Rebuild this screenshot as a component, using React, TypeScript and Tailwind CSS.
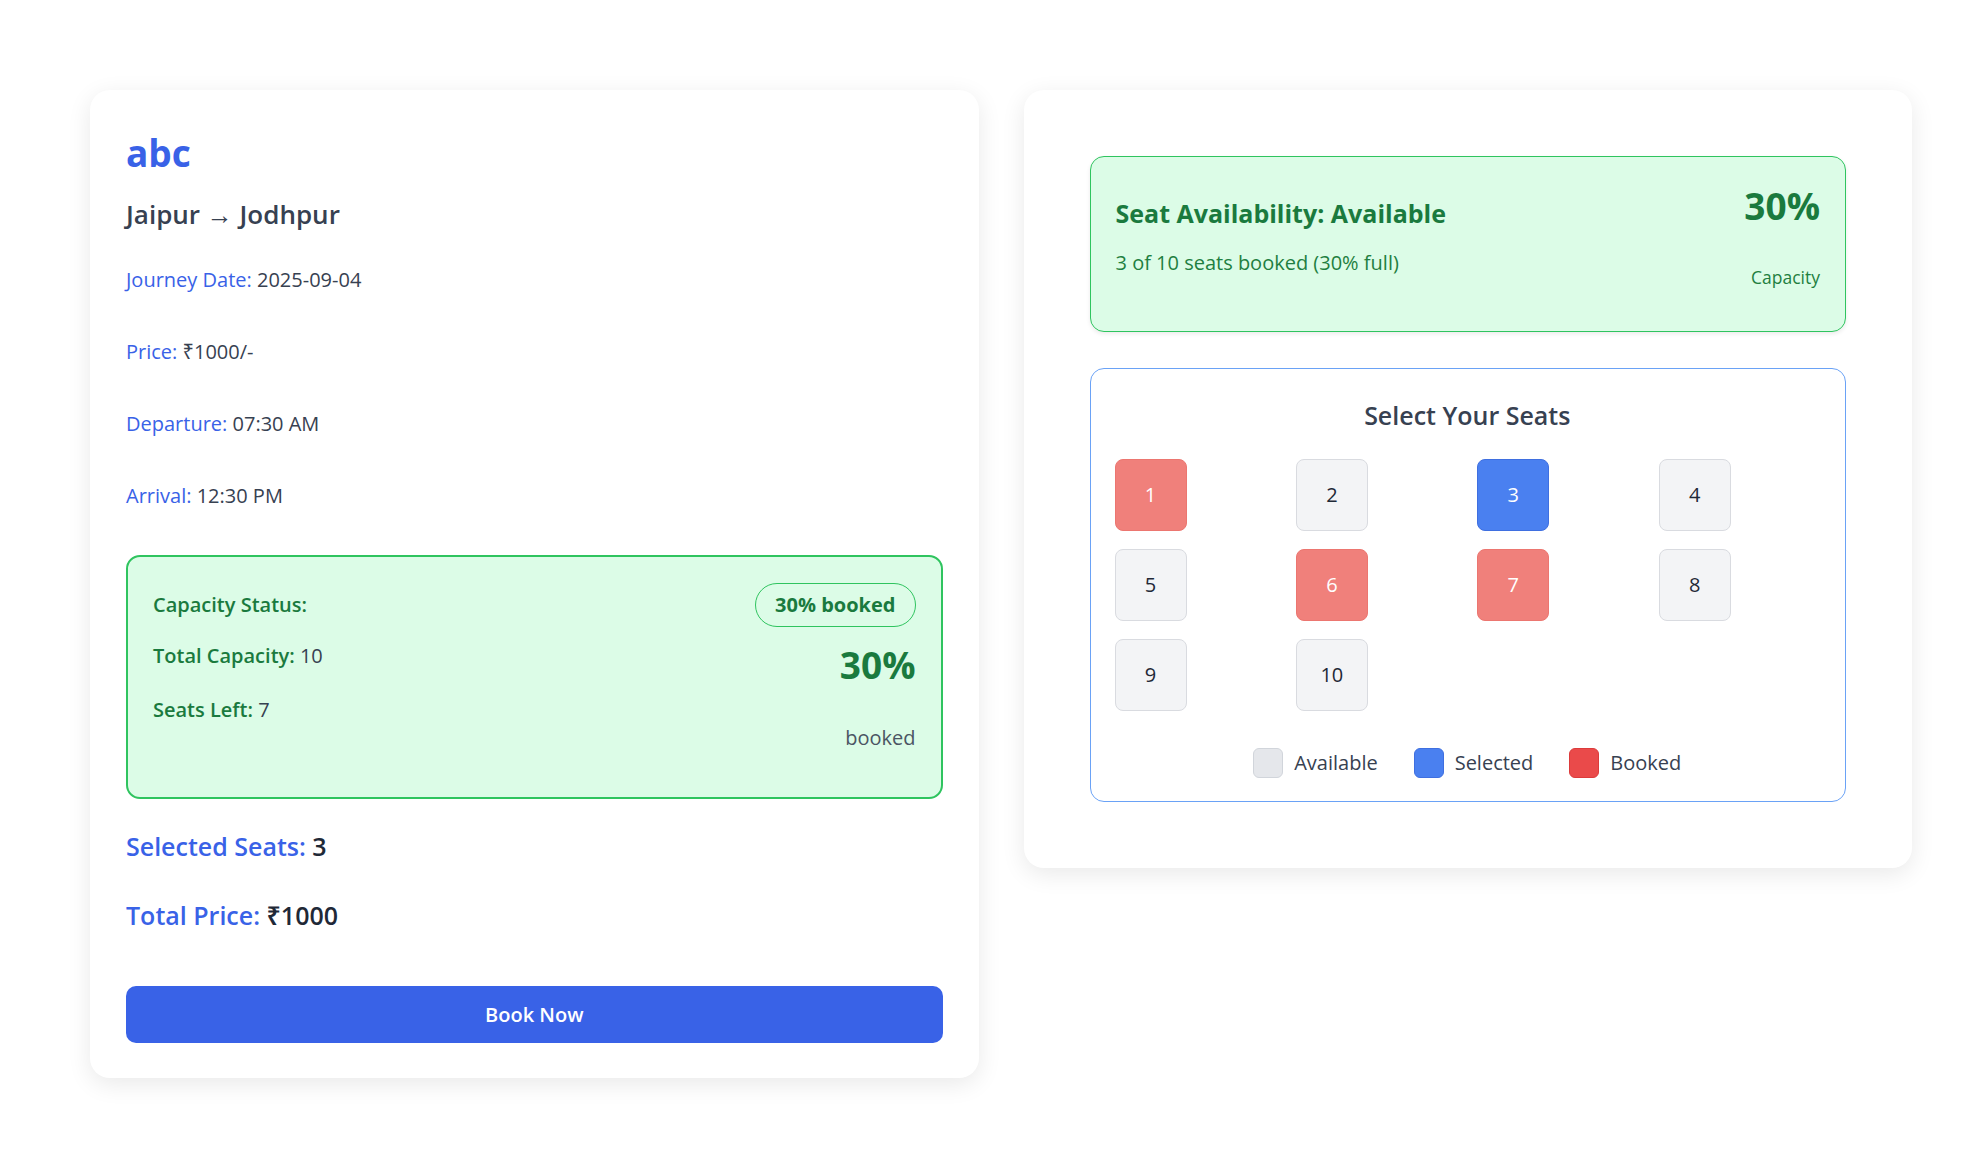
import React from "react";

type SeatState = "available" | "selected" | "booked";

const seats: { n: number; s: SeatState }[] = [
  { n: 1, s: "booked" },
  { n: 2, s: "available" },
  { n: 3, s: "selected" },
  { n: 4, s: "available" },
  { n: 5, s: "available" },
  { n: 6, s: "booked" },
  { n: 7, s: "booked" },
  { n: 8, s: "available" },
  { n: 9, s: "available" },
  { n: 10, s: "available" },
];

function Seat({ n, s }: { n: number; s: SeatState }) {
  const cls =
    s === "booked"
      ? "bg-[#f0807b] border-[#ec7670] text-white"
      : s === "selected"
      ? "bg-[#4a80f0] border-[#3f6fe0] text-white"
      : "bg-[#f3f4f6] border-[#d9dbe0] text-[#1f2937]";
  return (
    <div
      className={`w-[72px] h-[72px] rounded-[8px] border flex items-center justify-center text-[20px] font-medium ${cls}`}
    >
      {n}
    </div>
  );
}

function InfoRow({ label, value, className }: { label: string; value: string; className: string }) {
  return (
    <p className={`text-[20px] leading-[30px] ${className}`}>
      <span className="text-[#3962e7] font-medium">{label}</span>{" "}
      <span className="text-[#374151]">{value}</span>
    </p>
  );
}

export default function App() {
  return (
    <div
      className="min-h-screen bg-white"
      style={{ fontFamily: '"Open Sans", "Noto Sans", "Liberation Sans", sans-serif' }}
    >
      <div className="grid grid-cols-2 items-start gap-[45px] pl-[90px] pr-[70px] pt-[90px]">
        {/* Left card */}
        <div className="rounded-[20px] bg-white shadow-[0_6px_24px_rgba(0,0,0,0.09)] px-[36px] pt-[36px] pb-[35px]">
          <h1 className="pt-[4px] text-[37px] leading-[45px] font-bold text-[#3962e7]">abc</h1>
          <h2 className="mt-[21px] text-[26px] leading-[36px] font-semibold text-[#374151]">
            Jaipur → Jodhpur
          </h2>
          <InfoRow className="mt-[33px]" label="Journey Date:" value="2025-09-04" />
          <InfoRow className="mt-[42px]" label="Price:" value="₹1000/-" />
          <InfoRow className="mt-[42px]" label="Departure:" value="07:30 AM" />
          <InfoRow className="mt-[42px]" label="Arrival:" value="12:30 PM" />

          <div className="mt-[44px] rounded-[14px] border-2 border-[#2fc45f] bg-[#dcfce7] px-[25px] pt-[26px] pb-[44px]">
            <div className="flex items-center justify-between">
              <span className="text-[20px] leading-[30px] font-semibold text-[#1a7a3e]">Capacity Status:</span>
              <span className="rounded-full border border-[#2fc45f] px-[19px] py-[7px] text-[20px] leading-[28px] font-bold text-[#1a7a3e]">
                30% booked
              </span>
            </div>
            <div className="mt-[14px] flex items-start justify-between">
              <div>
                <p className="text-[20px] leading-[30px]">
                  <span className="font-semibold text-[#1a7a3e]">Total Capacity:</span>{" "}
                  <span className="text-[#374151]">10</span>
                </p>
                <p className="mt-[24px] text-[20px] leading-[30px]">
                  <span className="font-semibold text-[#1a7a3e]">Seats Left:</span>{" "}
                  <span className="text-[#374151]">7</span>
                </p>
              </div>
              <div className="text-right">
                <p className="text-[37px] leading-[48px] font-bold text-[#1a7a3e]">30%</p>
                <p className="mt-[34px] text-[20px] leading-[30px] text-[#4b5563]">booked</p>
              </div>
            </div>
          </div>

          <p className="mt-[30px] text-[25px] leading-[35px] font-semibold">
            <span className="text-[#3962e7]">Selected Seats:</span>{" "}
            <span className="text-[#1f2937]">3</span>
          </p>
          <p className="mt-[34px] text-[25px] leading-[35px] font-semibold">
            <span className="text-[#3962e7]">Total Price:</span>{" "}
            <span className="text-[#1f2937]">₹1000</span>
          </p>

          <button className="mt-[53px] w-full h-[57px] rounded-[10px] bg-[#3962e7] text-white text-[20px] font-semibold">
            Book Now
          </button>
        </div>

        {/* Right card */}
        <div className="rounded-[20px] bg-white shadow-[0_6px_24px_rgba(0,0,0,0.09)] p-[66px]">
          <div className="rounded-[14px] border border-[#2fc45f] bg-[#dcfce7] shadow-[0_2px_4px_rgba(0,0,0,0.08)] px-[25px] pt-[25px] pb-[41px] flex items-start justify-between">
            <div className="pt-[14px]">
              <p className="text-[25px] leading-[35px] font-bold text-[#1a7a3e]">Seat Availability: Available</p>
              <p className="mt-[17px] text-[20px] leading-[30px] text-[#1f7f41]">3 of 10 seats booked (30% full)</p>
            </div>
            <div className="text-right pt-[1px]">
              <p className="text-[37px] leading-[45px] font-bold text-[#1a7a3e]">30%</p>
              <p className="mt-[37px] text-[17.5px] leading-[25px] text-[#1f7f41]">Capacity</p>
            </div>
          </div>

          <div className="mt-[36px] rounded-[14px] border border-[#6aa2f6] bg-white pl-[24px] pr-[25px] pt-[29px] pb-[23px]">
            <h3 className="text-center text-[25px] leading-[35px] font-semibold text-[#374151]">
              Select Your Seats
            </h3>
            <div className="mt-[26px] grid grid-cols-4 gap-x-[20px] gap-y-[18px]">
              {seats.map((s) => (
                <Seat key={s.n} n={s.n} s={s.s} />
              ))}
            </div>
            <div className="mt-[37px] flex items-center justify-center gap-[36px]">
              <div className="flex items-center gap-[11px]">
                <span className="w-[30px] h-[30px] rounded-[6px] border border-[#d1d5db] bg-[#e5e7eb]" />
                <span className="text-[20px] leading-[30px] text-[#374151]">Available</span>
              </div>
              <div className="flex items-center gap-[11px]">
                <span className="w-[30px] h-[30px] rounded-[6px] border border-[#3f6fe0] bg-[#4a80f0]" />
                <span className="text-[20px] leading-[30px] text-[#374151]">Selected</span>
              </div>
              <div className="flex items-center gap-[11px]">
                <span className="w-[30px] h-[30px] rounded-[6px] border border-[#dc3b3b] bg-[#ea4a4a]" />
                <span className="text-[20px] leading-[30px] text-[#374151]">Booked</span>
              </div>
            </div>
          </div>
        </div>
      </div>
    </div>
  );
}
